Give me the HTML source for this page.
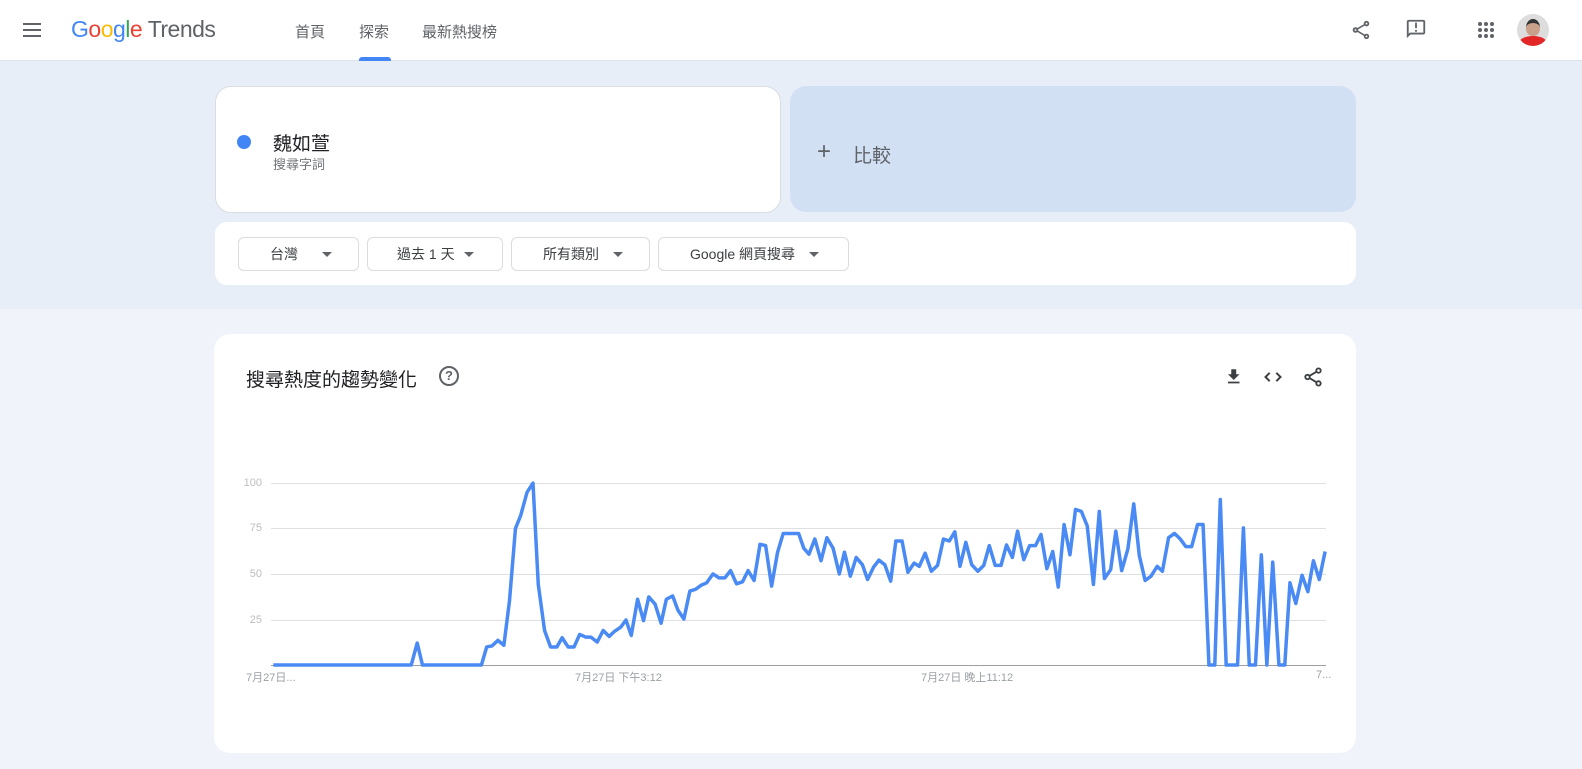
<!DOCTYPE html>
<html><head><meta charset="utf-8"><style>
*{box-sizing:border-box;margin:0;padding:0}
body{width:1582px;height:769px;overflow:hidden;background:#f0f3fa;font-family:"Liberation Sans","Noto Sans CJK TC",sans-serif;position:relative;color:#202124}
.hdr{position:absolute;left:0;top:0;width:1582px;height:61px;background:#fff;border-bottom:1px solid #dde3ee}
.top{position:absolute;left:0;top:61px;width:1582px;height:248px;background:#e8eef8}
.abs{position:absolute}
.card{position:absolute;background:#fff;border-radius:16px}
.nav{position:absolute;top:21px;font-size:15px;color:#5f6368}
.dd{position:absolute;top:237px;height:34px;border:1px solid #dadce0;border-radius:6px;font-size:14px;color:#3c4043;line-height:32px}
.dd .t{position:absolute;top:0}
.dd .a{position:absolute;top:14px;width:0;height:0;border-left:5px solid transparent;border-right:5px solid transparent;border-top:5px solid #5f6368}
.gl{position:absolute;left:271px;width:1055px;height:1px;background:#e0e0e0}
.yl{position:absolute;left:230px;width:32px;text-align:right;font-size:11px;color:#bdbdbd}
.xl{position:absolute;top:669px;font-size:11px;color:#9aa0a6}
</style></head><body>
<div class="hdr"></div>
<div class="top"></div>
<svg class="abs" style="left:22px;top:22px" width="20" height="16"><path d="M1 2h18M1 8h18M1 14h18" stroke="#5f6368" stroke-width="2"/></svg>
<div class="abs" style="left:71px;top:16px;font-size:23px;letter-spacing:-0.5px"><span style="color:#4285f4">G</span><span style="color:#ea4335">o</span><span style="color:#fbbc05">o</span><span style="color:#4285f4">g</span><span style="color:#34a853">l</span><span style="color:#ea4335">e</span> <span style="color:#5f6368">Trends</span></div>
<div class="nav" style="left:295px">首頁</div>
<div class="nav" style="left:359px">探索</div>
<div class="abs" style="left:359px;top:57px;width:32px;height:4px;background:#4285f4;border-radius:3px 3px 0 0"></div>
<div class="nav" style="left:422px">最新熱搜榜</div>
<svg class="abs" style="left:1350px;top:19px" width="22" height="22" viewBox="0 0 24 24"><path fill="#5f6368" d="M18 16.08c-.76 0-1.44.3-1.96.77L8.91 12.7c.05-.23.09-.46.09-.7s-.04-.47-.09-.7l7.05-4.11c.54.5 1.25.81 2.04.81 1.66 0 3-1.34 3-3s-1.34-3-3-3-3 1.34-3 3c0 .24.04.47.09.7L8.04 9.81C7.5 9.31 6.79 9 6 9c-1.66 0-3 1.34-3 3s1.34 3 3 3c.79 0 1.5-.31 2.04-.81l7.12 4.16c-.05.21-.08.43-.08.65 0 1.61 1.31 2.92 2.92 2.92s2.92-1.31 2.92-2.92-1.31-2.920-2.92-2.92zM18 4c.55 0 1 .45 1 1s-.45 1-1 1-1-.45-1-1 .45-1 1-1zM6 13c-.55 0-1-.45-1-1s.45-1 1-1 1 .45 1 1-.45 1-1 1zm12 7.02c-.55 0-1-.45-1-1s.45-1 1-1 1 .45 1 1-.45 1-1 1z"/></svg>
<svg class="abs" style="left:1405px;top:18px" width="22" height="22" viewBox="0 0 24 24"><path fill="#5f6368" d="M20 2H4c-1.1 0-2 .9-2 2v18l4-4h14c1.1 0 2-.9 2-2V4c0-1.1-.9-2-2-2zm0 14H5.17L4 17.17V4h16v12zM11 5h2v6h-2zm0 8h2v2h-2z"/></svg>
<svg class="abs" style="left:1477px;top:21px" width="18" height="18" viewBox="0 0 18 18"><g fill="#5f6368"><circle cx="3" cy="3" r="2"/><circle cx="9" cy="3" r="2"/><circle cx="15" cy="3" r="2"/><circle cx="3" cy="9" r="2"/><circle cx="9" cy="9" r="2"/><circle cx="15" cy="9" r="2"/><circle cx="3" cy="15" r="2"/><circle cx="9" cy="15" r="2"/><circle cx="15" cy="15" r="2"/></g></svg>
<div class="abs" style="left:1517px;top:14px;width:32px;height:32px;border-radius:50%;background:#ddd;overflow:hidden"><div style="position:absolute;left:9px;top:5px;width:14px;height:17px;border-radius:50% 50% 45% 45%;background:#c9a08a;border-top:4px solid #333"></div><div style="position:absolute;left:2px;top:22px;width:28px;height:14px;border-radius:50% 50% 0 0;background:#e32626"></div></div>

<div class="card" style="left:215px;top:86px;width:566px;height:127px;border:1px solid #dadce0"></div>
<div class="abs" style="left:237px;top:135px;width:14px;height:14px;border-radius:50%;background:#4285f4"></div>
<div class="abs" style="left:273px;top:129px;font-size:19px;color:#202124">魏如萱</div>
<div class="abs" style="left:273px;top:154px;font-size:13px;color:#70757a">搜尋字詞</div>
<div class="card" style="left:790px;top:86px;width:566px;height:126px;background:#d2e0f4"></div>
<div class="abs" style="left:817px;top:138px;font-size:24px;line-height:28px;color:#5f6368">+</div>
<div class="abs" style="left:853px;top:141px;font-size:19px;color:#5f6368">比較</div>

<div class="card" style="left:215px;top:222px;width:1141px;height:63px;border-radius:12px"></div>
<div class="dd" style="left:238px;width:121px"><span class="t" style="left:31px">台灣</span><span class="a" style="left:83px"></span></div>
<div class="dd" style="left:367px;width:136px"><span class="t" style="left:29px">過去 1 天</span><span class="a" style="left:96px"></span></div>
<div class="dd" style="left:511px;width:139px"><span class="t" style="left:31px">所有類別</span><span class="a" style="left:101px"></span></div>
<div class="dd" style="left:658px;width:191px"><span class="t" style="left:31px">Google 網頁搜尋</span><span class="a" style="left:150px"></span></div>

<div class="card" style="left:214px;top:334px;width:1142px;height:419px"></div>
<div class="abs" style="left:246px;top:365px;font-size:19px;color:#202124">搜尋熱度的趨勢變化</div>
<div class="abs" style="left:439px;top:366px;width:20px;height:20px;border:2px solid #5f6368;border-radius:50%;font-size:13px;font-weight:bold;color:#5f6368;text-align:center;line-height:16px">?</div>
<svg class="abs" style="left:1223px;top:366px" width="22" height="22" viewBox="0 0 24 24"><path fill="#3c4043" d="M19 9h-4V3H9v6H5l7 7 7-7zM5 18v2h14v-2H5z" transform="scale(0.9) translate(1,1)"/></svg>
<svg class="abs" style="left:1262px;top:367px" width="22" height="20" viewBox="0 0 24 24"><path d="M8 7l-5 5 5 5M16 7l5 5-5 5" fill="none" stroke="#3c4043" stroke-width="2.4"/></svg>
<svg class="abs" style="left:1302px;top:366px" width="22" height="22" viewBox="0 0 24 24"><g fill="none" stroke="#3c4043" stroke-width="2"><circle cx="18" cy="5" r="2.4"/><circle cx="6" cy="12" r="2.4"/><circle cx="18" cy="19" r="2.4"/><path d="M8.1 10.8l7.8-4.6M8.1 13.2l7.8 4.6"/></g></svg>

<div class="gl" style="top:483px"></div><div class="gl" style="top:528px"></div><div class="gl" style="top:574px"></div><div class="gl" style="top:620px"></div>
<div class="gl" style="top:665px;background:#9e9e9e"></div>
<div class="yl" style="top:477px">100</div><div class="yl" style="top:522px">75</div><div class="yl" style="top:568px">50</div><div class="yl" style="top:614px">25</div>
<div class="xl" style="left:246px">7月27日...</div>
<div class="xl" style="left:575px">7月27日 下午3:12</div>
<div class="xl" style="left:921px">7月27日 晚上11:12</div>
<div class="xl" style="left:1316px">7...</div>

<svg class="abs" style="left:0;top:0" width="1582" height="769">
<g transform="translate(240,466) scale(0.3509,0.329)"><polyline vector-effect="non-scaling-stroke" fill="none" stroke="#4a8af4" stroke-width="3.5" stroke-linejoin="round" points="95,605 488,605 505,538 520,605 688,605 703,550 718,547 735,530 752,545 768,410 785,190 800,150 818,80 835,52 850,360 868,500 885,550 903,550 918,522 935,550 952,550 968,512 985,520 1000,520 1018,535 1035,500 1052,518 1068,502 1085,490 1100,468 1115,515 1133,405 1150,470 1165,398 1183,420 1200,478 1215,405 1233,395 1248,438 1265,465 1282,380 1298,375 1315,362 1330,355 1348,328 1365,340 1382,340 1398,318 1415,358 1432,352 1448,318 1465,348 1482,238 1498,242 1515,365 1532,262 1548,205 1568,205"/></g>
<g transform="translate(790,466) scale(0.3448,0.329)"><polyline vector-effect="non-scaling-stroke" fill="none" stroke="#4a8af4" stroke-width="3.5" stroke-linejoin="round" points="0,205 25,205 40,250 55,268 72,222 90,288 107,218 125,250 143,328 158,262 175,335 192,278 210,300 225,345 242,308 258,286 275,300 292,350 307,228 325,228 342,323 360,295 375,305 392,265 410,320 428,302 445,222 462,228 478,200 493,305 510,232 527,300 545,320 562,302 578,242 595,302 612,302 628,240 645,278 660,198 678,285 695,242 712,242 728,208 745,312 762,260 778,368 795,178 812,270 828,132 845,138 862,182 880,360 897,138 912,342 930,315 945,198 962,318 980,252 997,115 1013,272 1030,348 1047,335 1065,305 1080,320 1098,218 1115,205 1132,222 1148,245 1165,245 1182,178 1198,178 1215,605 1232,605 1248,102 1265,605 1298,605 1315,188 1332,605 1350,605 1367,270 1383,605 1400,292 1418,605 1435,605 1450,355 1467,418 1485,332 1502,382 1518,288 1535,345 1552,260"/></g>
</svg>
</body></html>
